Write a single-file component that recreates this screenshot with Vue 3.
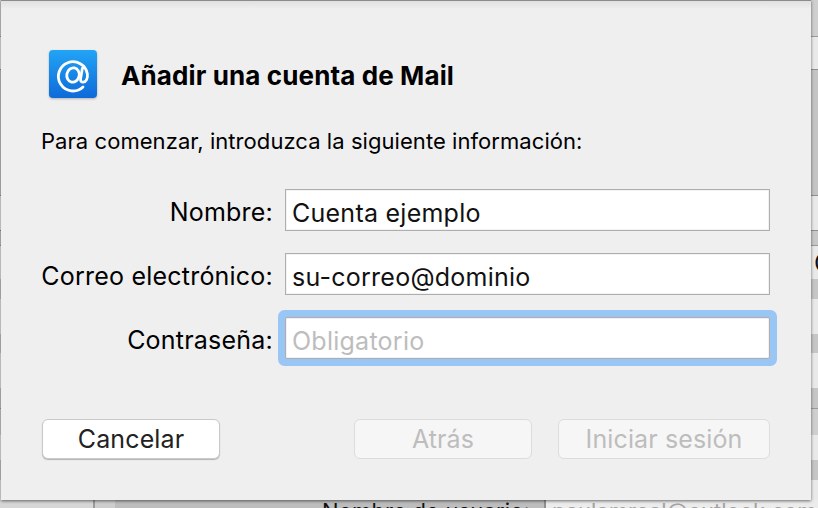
<script setup>
const fields = [
  { label: 'Nombre:', value: 'Cuenta ejemplo' },
  { label: 'Correo electrónico:', value: 'su-correo@dominio' },
  { label: 'Contraseña:', value: '', placeholder: 'Obligatorio', focused: true }
]
</script>

<template>
  <div class="screen">
    <div class="behind">
      <span class="cell first"></span>
      <span class="cell second"></span>
      <span class="cell name">Nombre de usuario:</span>
      <span class="cell value">paulamreal@outlook.com</span>
    </div>
    <span class="behind-glyph">C</span>

    <div class="sheet">
      <div class="head">
        <svg class="mail-icon" width="48" height="48" viewBox="0 0 48 48">
          <defs>
            <linearGradient id="tile" x1="0" y1="0" x2="0" y2="1">
              <stop offset="0" stop-color="#22a4f6" />
              <stop offset="1" stop-color="#0f6ad8" />
            </linearGradient>
          </defs>
          <rect width="48" height="48" rx="4" fill="url(#tile)" />
          <g fill="none" stroke="#fff" stroke-width="2.8" stroke-linecap="round">
            <path d="M34 37a14.6 14.6 0 1 1 4.4-13c.5 4.6-1.2 8-4.1 8.1-2 .1-3-1.2-2.7-3.2l1.7-10.4" />
            <ellipse cx="24" cy="25" rx="6.2" ry="7.2" transform="rotate(12 24 25)" />
          </g>
        </svg>
        <h1 class="title">Añadir una cuenta de Mail</h1>
      </div>

      <p class="intro">Para comenzar, introduzca la siguiente información:</p>

      <div class="form">
        <div v-for="field in fields" :key="field.label" class="row">
          <label class="label">{{ field.label }}</label>
          <input
            class="input"
            :class="{ focused: field.focused }"
            :value="field.value"
            :placeholder="field.placeholder"
          />
        </div>
      </div>

      <div class="actions">
        <button class="btn cancel">Cancelar</button>
        <div class="right-actions">
          <button class="btn back" disabled>Atrás</button>
          <button class="btn login" disabled>Iniciar sesión</button>
        </div>
      </div>
    </div>
  </div>
</template>

<style scoped>
.screen {
  position: relative;
  width: 818px;
  height: 508px;
  overflow: hidden;
  font-family: Inter, "Liberation Sans", sans-serif;
  background: linear-gradient(
    to bottom,
    #cfcfcf 0 36px,
    #9a9a9a 36px 37px,
    #e9e9e9 37px 69px,
    #8f8f8f 69px 70px,
    #c4c4c4 70px 195px,
    #8f8f8f 195px 196px,
    #e9e9e9 196px 230px,
    #8f8f8f 230px 231px,
    #c8c8c8 231px 245px,
    #9a9a9a 245px 246px,
    #e9e9e9 246px 279px,
    #c6c6c6 279px 299px,
    #e9e9e9 299px 334px,
    #c6c6c6 334px 353px,
    #e9e9e9 353px 388px,
    #c6c6c6 388px 408px,
    #9a9a9a 408px 409px,
    #cfcfcf 409px 435px,
    #e9e9e9 435px 460px,
    #c6c6c6 460px 480px,
    #e9e9e9 480px 508px
  );
}

.behind {
  position: absolute;
  left: 0;
  right: 0;
  top: 500px;
  height: 8px;
  display: flex;
  overflow: hidden;
  font-size: 22px;
  line-height: 8px;
  white-space: nowrap;
}

.cell {
  display: block;
  height: 8px;
  padding-top: 7px;
}

.first {
  width: 93px;
  background: #d6d6d6;
  border-right: 2px solid #9a9a9a;
}

.second {
  width: 20px;
  background: #cdcdcd;
}

.name {
  width: 431px;
  box-sizing: border-box;
  padding-left: 207px;
  background: #bdbdbd;
  color: #111;
  letter-spacing: 0.15px;
  border-right: 2px solid #8f8f8f;
}

.value {
  flex: 1;
  padding-left: 6px;
  background: #ececec;
  color: #a3a3a3;
}

.behind-glyph {
  position: absolute;
  left: 814px;
  top: 248px;
  font-size: 25px;
  line-height: 30px;
  color: #111;
}

.sheet {
  position: relative;
  box-sizing: border-box;
  width: 810px;
  height: 500px;
  margin-left: 1px;
  padding: 50px 41px 0 40px;
  background: linear-gradient(to bottom, #dfdfdf 0, #efefef 9px);
  box-shadow: inset 0 1px 0 #8c8c8c, 0 1px 3px rgba(0, 0, 0, 0.55);
}

.head {
  display: flex;
  align-items: center;
  gap: 24px;
  padding-left: 8px;
  height: 48px;
}

.mail-icon {
  flex: none;
  filter: drop-shadow(0 1px 1px rgba(0, 0, 0, 0.25));
}

.title {
  margin: 0;
  padding-top: 2px;
  font-size: 26px;
  font-weight: 700;
  letter-spacing: 0.12px;
  color: #000;
}

.intro {
  margin: 30px 0 0 0;
  font-size: 22px;
  line-height: 26px;
  letter-spacing: 0.06px;
  color: #000;
}

.form {
  margin-top: 35px;
  display: flex;
  flex-direction: column;
  gap: 22px;
}

.row {
  display: flex;
  align-items: center;
  gap: 12px;
}

.label {
  width: 232px;
  padding-top: 4px;
  text-align: right;
  font-size: 25px;
  letter-spacing: 0.22px;
  color: #000;
}

.input {
  box-sizing: border-box;
  width: 485px;
  height: 42px;
  padding: 5px 6px 0;
  border: 1px solid #aeaeae;
  border-radius: 0;
  background: #fff;
  box-shadow: inset 0 0 0 1px #f2f2f2;
  font-family: inherit;
  font-size: 25px;
  letter-spacing: 0.25px;
  color: #111;
  outline: none;
}

.input::placeholder {
  color: #bdbdbd;
}

.input.focused {
  box-shadow: inset 0 0 0 1px #f2f2f2, 0 0 0 7px #9ac6f5;
  border-radius: 2px;
}

.actions {
  margin-top: 60px;
  display: flex;
  justify-content: space-between;
  padding-left: 1px;
}

.right-actions {
  display: flex;
  gap: 26px;
}

.btn {
  box-sizing: border-box;
  height: 40px;
  border-radius: 6px;
  font-family: inherit;
  font-size: 25px;
  letter-spacing: 0.12px;
  padding: 0;
}

.cancel {
  width: 178px;
  border: 1px solid #c9c9c9;
  background: #fff;
  color: #222;
  box-shadow: 0 1px 1px rgba(0, 0, 0, 0.25);
}

.back,
.login {
  border: 1px solid #dcdcdc;
  background: #f6f6f6;
  color: #bdbdbd;
}

.back {
  width: 178px;
}

.login {
  width: 212px;
}
</style>
